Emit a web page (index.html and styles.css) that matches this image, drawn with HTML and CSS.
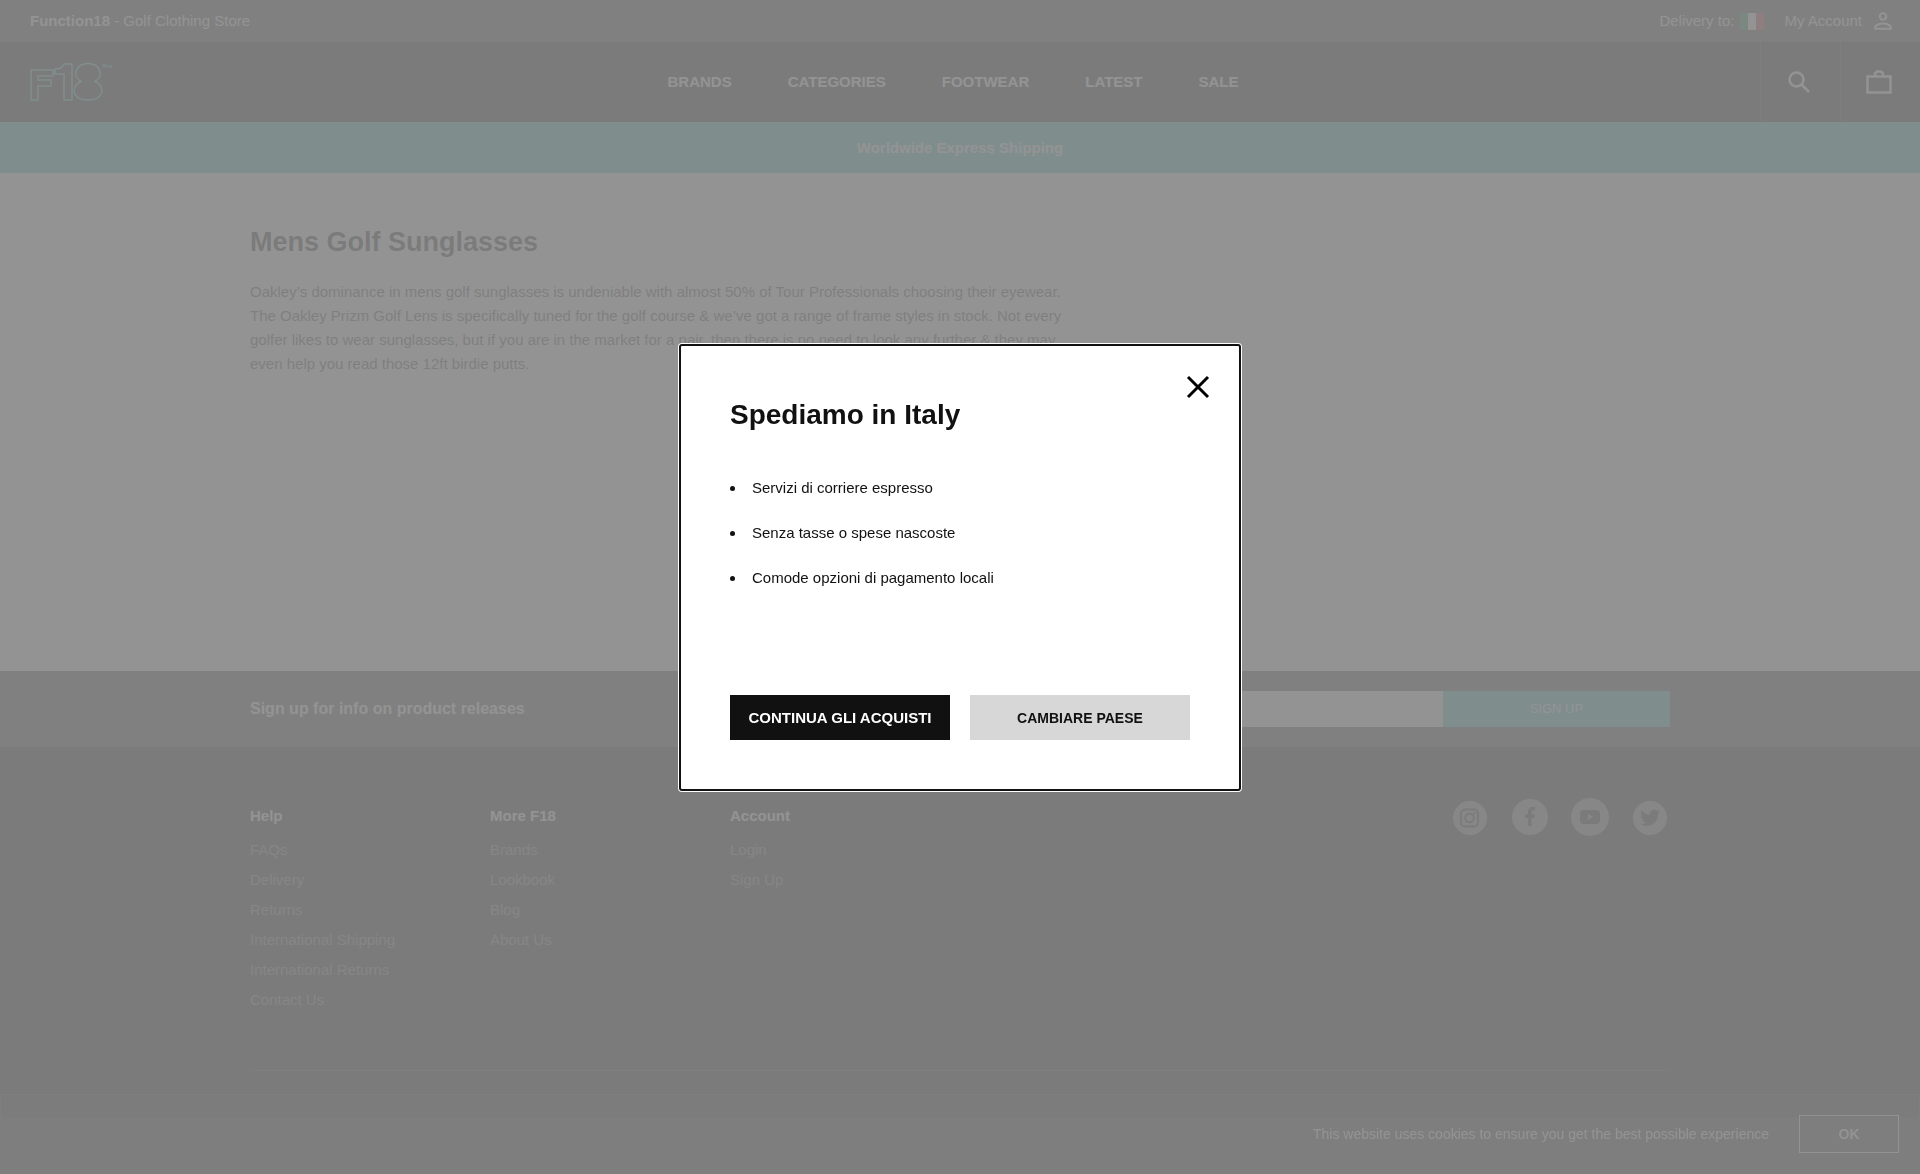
FILE: index.html
```html
<!DOCTYPE html>
<html lang="en">
<head>
<meta charset="utf-8">
<title>Mens Golf Sunglasses | Function18</title>
<meta name="viewport" content="width=device-width, initial-scale=1">
<link rel="stylesheet" href="styles.css">
</head>
<body>
<div class="page">
  <header>
    <div class="topbar">
      <p class="tagline"><strong>Function18</strong> - Golf Clothing Store</p>
      <div class="topbar-links">
        <a class="delivery" href="#">Delivery to:
          <svg class="flag" viewBox="0 0 24 17" role="img" aria-label="Italy"><path fill="#009246" d="M0 0h8v17H0z"/><path fill="#fff" d="M8 0h8v17H8z"/><path fill="#ce2b37" d="M16 0h8v17h-8z"/></svg>
        </a>
        <a class="account" href="#">My Account
          <svg class="person" viewBox="0 0 18 18" aria-hidden="true"><g fill="none" stroke="currentColor" stroke-width="2"><circle cx="9" cy="4.5" r="3.3"/><path d="M1.2 16.8v-1.6c0-2.400 5-3.700 7.800-3.700s7.800 1.300 7.800 3.700v1.600z"/></g></svg>
        </a>
      </div>
    </div>
    <div class="mainbar">
      <a class="logo" href="#" aria-label="Function18 home">
        <svg viewBox="0 0 82 40" aria-hidden="true"><g fill="none" stroke="currentColor" stroke-width="1.500"><path d="M1 8h22v6H8v4h13v6H8v14H1z"/><path d="M25 12V7c5 0 8-2 9-5h8v36h-8V12z"/><path d="M51 19.500C42 15 45 1.500 58 1.500S74 15 65 19.500C76 24 74 38 58 38S40 24 51 19.500z"/></g><path fill="none" stroke="currentColor" d="M72 3h4M74 3v3M77 6V3l2 2 2-2v3"/></svg>
      </a>
      <nav class="nav" aria-label="Main">
        <a href="#">BRANDS</a><a href="#">CATEGORIES</a><a href="#">FOOTWEAR</a><a href="#">LATEST</a><a href="#">SALE</a>
      </nav>
      <div class="tools">
        <button type="button" class="tool" aria-label="Search"><svg viewBox="0 0 24 24" width="24" height="24" aria-hidden="true"><g fill="none" stroke="currentColor" stroke-width="2.500"><circle cx="9.500" cy="9.500" r="7"/><path d="M14.500 14.500l7.500 7.500"/></g></svg></button>
        <button type="button" class="tool" aria-label="Basket"><svg viewBox="0 0 26 26" width="26" height="26" aria-hidden="true"><g fill="none" stroke="currentColor" stroke-width="2.500"><path d="M1.500 7.500h23v16h-23zM9 7V4.500L11 2.500h4l2 2V7"/></g></svg></button>
      </div>
    </div>
    <p class="banner">Worldwide Express Shipping</p>
  </header>

  <main class="main">
    <h1>Mens Golf Sunglasses</h1>
    <p class="intro">Oakley’s dominance in mens golf sunglasses is undeniable with almost 50% of Tour Professionals choosing their eyewear. The Oakley Prizm Golf Lens is specifically tuned for the golf course &amp; we’ve got a range of frame styles in stock. Not every golfer likes to wear sunglasses, but if you are in the market for a pair, then there is no need to look any further &amp; they may even help you read those 12ft birdie putts.</p>
  </main>

  <footer class="footer">
    <div class="newsletter">
      <form class="container newsletter-row">
        <label for="email">Sign up for info on product releases</label>
        <div class="signup"><input id="email" type="email"><button type="button">SIGN UP</button></div>
      </form>
    </div>
    <div class="container">
      <div class="footer-links">
        <section><h2>Help</h2><ul><li><a href="#">FAQs</a></li><li><a href="#">Delivery</a></li><li><a href="#">Returns</a></li><li><a href="#">International Shipping</a></li><li><a href="#">International Returns</a></li><li><a href="#">Contact Us</a></li></ul></section>
        <section><h2>More F18</h2><ul><li><a href="#">Brands</a></li><li><a href="#">Lookbook</a></li><li><a href="#">Blog</a></li><li><a href="#">About Us</a></li></ul></section>
        <section><h2>Account</h2><ul><li><a href="#">Login</a></li><li><a href="#">Sign Up</a></li></ul></section>
        <div class="social">
          <a href="#" aria-label="Instagram"><svg viewBox="0 0 38 38" aria-hidden="true"><circle cx="19" cy="20" r="17" fill="currentColor"/><g class="glyph-line"><rect x="10" y="11.500" width="17" height="17" rx="4"/><circle cx="18.500" cy="20" r="4.300"/></g><circle class="glyph" cx="23.500" cy="15.200" r="1.200"/></svg></a>
          <a href="#" aria-label="Facebook"><svg viewBox="0 0 38 38" aria-hidden="true"><circle cx="19" cy="19" r="18" fill="currentColor"/><path class="glyph" d="M17 28V20h-3v-3.500h3V14c0-3.500 2-5 4.500-5H24v3.500h-1.700c-1.300 0-1.600.600-1.600 1.700v2.300H24l-.500 3.500h-2.800v8z"/></svg></a>
          <a href="#" aria-label="YouTube"><svg viewBox="0 0 38 38" aria-hidden="true"><circle cx="19" cy="19" r="19" fill="currentColor"/><path class="glyph" fill-rule="evenodd" d="M12.500 12h13c2.500 0 3.500 1.200 3.500 3.500v7c0 2.300-1 3.500-3.500 3.500h-13C10 26 9 24.800 9 22.500v-7C9 13.200 10 12 12.500 12zm4.500 4v6l5-3z"/></svg></a>
          <a href="#" aria-label="Twitter"><svg viewBox="0 0 38 38" aria-hidden="true"><circle cx="19" cy="20" r="17" fill="currentColor"/><path class="glyph" d="M29 13.600c-.700.300-1.500.500-2.300.600.800-.500 1.500-1.300 1.800-2.200-.800.500-1.700.800-2.600 1a4.100 4.100 0 0 0-7 3.700c-3.400-.200-6.400-1.800-8.400-4.300-1.100 1.900-.600 4.300 1.200 5.500-.600 0-1.300-.200-1.800-.500 0 2 1.400 3.700 3.300 4.100-.600.200-1.200.200-1.900.100.500 1.600 2.100 2.800 3.900 2.800A8.300 8.300 0 0 1 9 26.100c9 5.300 18-1 18-10.400.8-.600 1.500-1.300 2-2.100z"/></svg></a>
        </div>
      </div>
    </div>
    <div class="legal"></div>
  </footer>

  <aside class="cookies" aria-label="Cookie notice">
    <p>This website uses cookies to ensure you get the best possible experience</p>
    <button type="button">OK</button>
  </aside>
</div>

<div class="overlay">
  <div class="modal" role="dialog" aria-modal="true" aria-labelledby="modal-title">
    <button type="button" class="close" aria-label="Chiudi"><svg viewBox="0 0 24 24" width="24" height="24" aria-hidden="true"><path d="M2 2l20 20M22 2L2 22" fill="none" stroke="currentColor" stroke-width="3"/></svg></button>
    <h2 id="modal-title">Spediamo in Italy</h2>
    <ul>
      <li>Servizi di corriere espresso</li>
      <li>Senza tasse o spese nascoste</li>
      <li>Comode opzioni di pagamento locali</li>
    </ul>
    <div class="actions">
      <button type="button" class="primary">CONTINUA GLI ACQUISTI</button>
      <button type="button" class="secondary">CAMBIARE PAESE</button>
    </div>
  </div>
</div>
</body>
</html>
```
FILE: styles.css
```css
:root {
  --ink: #111;
  --teal: #37c3b9;
  --strip: #3c3c3c;
}

* { box-sizing: border-box; }

body {
  margin: 0;
  font: 15px/24px "Liberation Sans", Arial, sans-serif;
  color: var(--ink);
  background: #fff;
}

h1, h2, p, ul { margin: 0; padding: 0; }
a { color: inherit; text-decoration: none; }
button, input { font: inherit; color: inherit; border: 0; border-radius: 0; padding: 0; background: none; }
svg { display: block; }

.page { min-height: 100vh; display: flex; flex-direction: column; }

/* Header */
.topbar {
  display: flex;
  justify-content: space-between;
  align-items: center;
  height: 42px;
  padding: 0 28px 0 30px;
  color: #fff;
  background: var(--strip);
}
.topbar-links, .delivery, .account { display: flex; align-items: center; }
.topbar-links { gap: 20px; }
.delivery { gap: 6px; }
.account { gap: 12px; }
.flag { width: 24px; height: 17px; }
.person { width: 18px; height: 18px; }

.mainbar {
  display: grid;
  grid-template-columns: 1fr auto 1fr;
  align-items: center;
  height: 80px;
  color: #fff;
  background: var(--ink);
}
.logo { margin-left: 30px; width: 82px; color: var(--teal); }
.nav { display: flex; gap: 56px; padding-right: 14px; font-weight: bold; }
.tools { display: flex; justify-content: flex-end; align-self: stretch; }
.tool { width: 80px; display: grid; place-items: center; padding-right: 3px; border-left: 1px solid #333; }

.banner {
  padding: 14px 0 13px;
  text-align: center;
  font-weight: bold;
  color: #fff;
  background: var(--teal);
}

/* Content */
.container, .main { width: 100%; max-width: 1460px; margin: 0 auto; padding: 0 20px; }
.main { flex: 1; padding-top: 51px; }
.main h1 { font-size: 27px; line-height: 36px; margin-bottom: 20px; }
.intro { max-width: 830px; color: #333; }

/* Footer */
.footer { color: #fff; background: var(--ink); }
.newsletter { background: var(--strip); }
.newsletter-row { display: flex; justify-content: space-between; align-items: center; height: 76px; }
.newsletter label { font-size: 16px; font-weight: bold; }
.signup { display: flex; width: 50%; }
.signup input { flex: 1; height: 36px; padding: 0 12px; color: var(--ink); background: #fff; }
.signup button { width: 32%; font-size: 13px; background: var(--teal); }
.footer-links {
  display: grid;
  grid-template-columns: 240px 240px 240px 1fr;
  height: 324px;
  padding-top: 57px;
  border-bottom: 1px solid #333;
}
.footer h2 { font-size: 15px; line-height: 24px; margin-bottom: 7px; }
.footer ul { list-style: none; line-height: 30px; color: #777; }
.social { display: flex; justify-content: flex-end; gap: 22px; margin-top: -6px; padding-right: 1px; color: #888; }
.social svg { width: 38px; height: 38px; }
.glyph { fill: var(--ink); }
.glyph-line { fill: none; stroke: var(--ink); stroke-width: 2; }
.legal { height: 57px; margin-top: 46px; background: #303030; }

.cookies {
  position: fixed;
  inset: auto 0 0;
  display: flex;
  justify-content: flex-end;
  align-items: center;
  gap: 30px;
  height: 80px;
  padding: 0 20px;
  font-size: 14px;
  color: #fff;
  background: rgba(34, 34, 34, .3);
  border: 1px solid #333;
}
.cookies button { width: 100px; height: 38px; font-weight: bold; border: 1px solid #fff; }

/* Dialog */
.overlay {
  position: fixed;
  inset: 0;
  display: flex;
  justify-content: center;
  align-items: center;
  padding: 20px;
  background: rgba(135, 135, 135, .9);
}
.modal {
  position: relative;
  width: 560px;
  max-width: 100%;
  margin-bottom: 39px;
  padding: 50px;
  background: #fff;
  border-radius: 2px;
  outline: 2px solid var(--ink);
  outline-offset: -1px;
  box-shadow: 0 0 0 2px #fff;
}
.modal h2 { font-size: 28px; line-height: 40px; margin-bottom: 41px; }
.modal ul { list-style: none; }
.modal li { display: flex; align-items: center; gap: 17px; margin-bottom: 21px; }
.modal li::before { content: ""; width: 5px; height: 5px; border-radius: 50%; background: var(--ink); }
.close { position: absolute; top: 30px; right: 30px; color: #000; }
.actions { display: grid; grid-template-columns: 1fr 1fr; gap: 20px; margin-top: 105px; }
.actions button { height: 45px; font-weight: bold; }
.primary { color: #fff; background: var(--ink); }
.secondary { font-size: 14px; background: #d7d7d7; }
```
